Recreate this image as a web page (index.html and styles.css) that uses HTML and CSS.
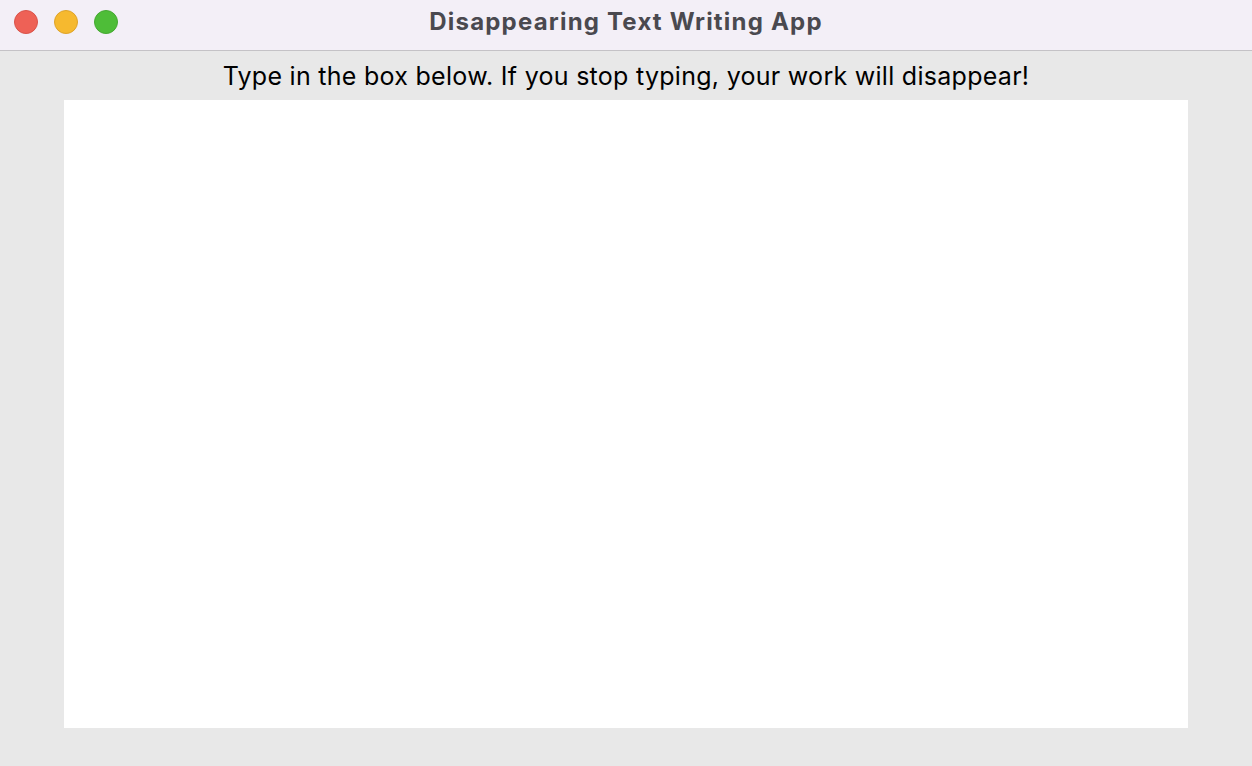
FILE: index.html
```html
<!DOCTYPE html>
<html>
<head>
<meta charset="utf-8">
<link rel="stylesheet" href="styles.css">
</head>
<body>
<div class="window">
  <header class="titlebar">
    <div class="lights">
      <span class="light red"></span>
      <span class="light yellow"></span>
      <span class="light green"></span>
    </div>
    <div class="title">Disappearing Text Writing App</div>
  </header>
  <main class="content">
    <p class="prompt">Type in the box below. If you stop typing, your work will disappear!</p>
    <textarea class="editor"></textarea>
  </main>
</div>
</body>
</html>
```
FILE: styles.css
```css
html, body {
  margin: 0;
  padding: 0;
  width: 1252px;
  height: 766px;
  overflow: hidden;
  background: #e8e8e8;
  font-family: Inter, "Liberation Sans", sans-serif;
}
.window {
  display: flex;
  flex-direction: column;
  height: 766px;
}
.titlebar {
  position: relative;
  height: 50px;
  background: #f3eff7;
  border-bottom: 1px solid #c4c2c6;
  display: flex;
  align-items: center;
  justify-content: center;
  flex-shrink: 0;
}
.lights {
  position: absolute;
  left: 14px;
  top: 10px;
  display: flex;
  gap: 16px;
}
.light {
  width: 24px;
  height: 24px;
  border-radius: 50%;
  box-sizing: border-box;
  border: 1px solid rgba(0,0,0,0.08);
}
.red { background: #ee6156; border-color: #d9534a; }
.yellow { background: #f6b92f; border-color: #dea32a; }
.green { background: #4ebd38; border-color: #45a832; }
.title {
  font-size: 24px;
  font-weight: 700;
  letter-spacing: 1.2px;
  color: #4a494f;
  margin-top: -8px;
}
.content {
  flex: 1;
  display: flex;
  flex-direction: column;
  align-items: center;
}
.prompt {
  margin: 8px 0 0;
  height: 41px;
  font-size: 25px;
  letter-spacing: 0.28px;
  color: #000;
  line-height: 34px;
}
.editor {
  width: 1124px;
  height: 628px;
  border: none;
  background: #fff;
  resize: none;
  outline: none;
  margin: 0;
  padding: 0;
  display: block;
}
```
